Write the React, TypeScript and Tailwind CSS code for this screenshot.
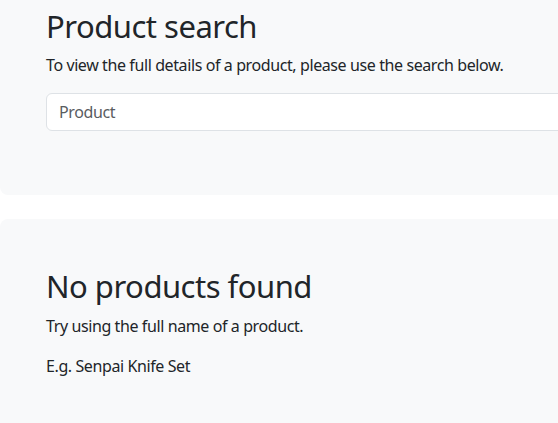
export default function App() {
  return (
    <div
      className="h-[423px] w-[558px] overflow-hidden bg-white text-[#212529] tracking-[-0.4px]"
      style={{ fontFamily: '"Noto Sans", "Open Sans", sans-serif' }}
    >
      <div className="w-[720px] rounded-b-lg bg-[#f8f9fa] px-[46px] pt-[7px] pb-12">
        <h1 className="mb-2 text-[31px] leading-[38.4px] font-normal tracking-[-0.5px]">Product search</h1>
        <p className="mb-4 text-base leading-6">
          To view the full details of a product, please use the search below.
        </p>
        <div className="mb-4">
          <input
            type="text"
            placeholder="Product"
            className="block h-[38px] w-full rounded-md border border-[#dee2e6] bg-white px-3 text-base tracking-[-0.4px] text-[#212529] placeholder:text-[#595c5f] outline-none"
          />
        </div>
      </div>
      <div className="mt-6 w-[720px] rounded-lg bg-[#f8f9fa] px-[46px] py-12">
        <h1 className="mb-2 text-[31px] leading-[38.4px] font-normal tracking-[-0.5px]">No products found</h1>
        <p className="mb-4 text-base leading-6">Try using the full name of a product.</p>
        <p className="mb-4 text-base leading-6">E.g. Senpai Knife Set</p>
      </div>
    </div>
  );
}
